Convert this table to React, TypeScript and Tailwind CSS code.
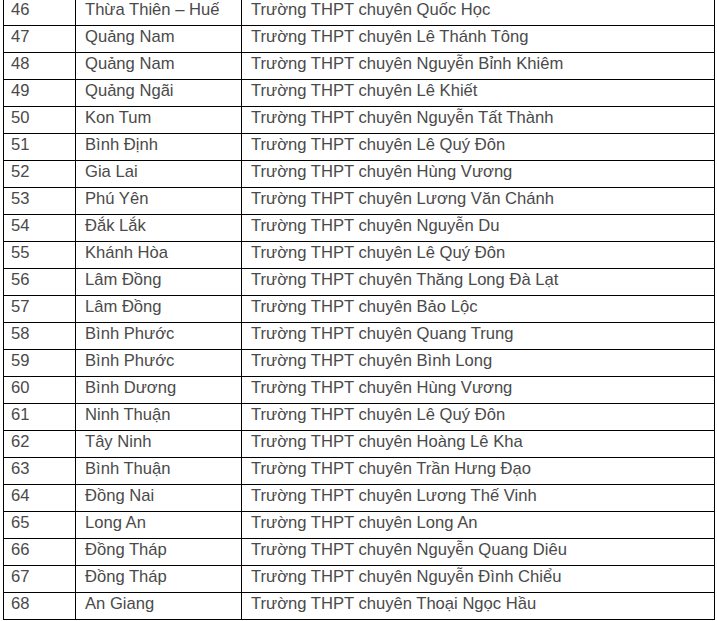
const rows: [number, string, string][] = [
  [46, 'Thừa Thiên – Huế', 'Trường THPT chuyên Quốc Học'],
  [47, 'Quảng Nam', 'Trường THPT chuyên Lê Thánh Tông'],
  [48, 'Quảng Nam', 'Trường THPT chuyên Nguyễn Bỉnh Khiêm'],
  [49, 'Quảng Ngãi', 'Trường THPT chuyên Lê Khiết'],
  [50, 'Kon Tum', 'Trường THPT chuyên Nguyễn Tất Thành'],
  [51, 'Bình Định', 'Trường THPT chuyên Lê Quý Đôn'],
  [52, 'Gia Lai', 'Trường THPT chuyên Hùng Vương'],
  [53, 'Phú Yên', 'Trường THPT chuyên Lương Văn Chánh'],
  [54, 'Đắk Lắk', 'Trường THPT chuyên Nguyễn Du'],
  [55, 'Khánh Hòa', 'Trường THPT chuyên Lê Quý Đôn'],
  [56, 'Lâm Đồng', 'Trường THPT chuyên Thăng Long Đà Lạt'],
  [57, 'Lâm Đồng', 'Trường THPT chuyên Bảo Lộc'],
  [58, 'Bình Phước', 'Trường THPT chuyên Quang Trung'],
  [59, 'Bình Phước', 'Trường THPT chuyên Bình Long'],
  [60, 'Bình Dương', 'Trường THPT chuyên Hùng Vương'],
  [61, 'Ninh Thuận', 'Trường THPT chuyên Lê Quý Đôn'],
  [62, 'Tây Ninh', 'Trường THPT chuyên Hoàng Lê Kha'],
  [63, 'Bình Thuận', 'Trường THPT chuyên Trần Hưng Đạo'],
  [64, 'Đồng Nai', 'Trường THPT chuyên Lương Thế Vinh'],
  [65, 'Long An', 'Trường THPT chuyên Long An'],
  [66, 'Đồng Tháp', 'Trường THPT chuyên Nguyễn Quang Diêu'],
  [67, 'Đồng Tháp', 'Trường THPT chuyên Nguyễn Đình Chiểu'],
  [68, 'An Giang', 'Trường THPT chuyên Thoại Ngọc Hầu'],
]

export default function App() {
  return (
    <div className="h-[621px] w-[717px] overflow-hidden bg-white font-['Liberation_Sans',Arial,sans-serif] text-[16.6px] text-[#4a4a4a]">
      <table className="ml-[3px] mt-[-2px] w-[712px] table-fixed border-collapse">
        <colgroup>
          <col className="w-[72px]" />
          <col className="w-[166px]" />
          <col />
        </colgroup>
        <tbody>
          {rows.map(([no, province, school]) => (
            <tr key={no} className="h-[27px]">
              <td className="border border-black px-[7px] pt-[2px] align-top leading-[18px]">{no}</td>
              <td className="border border-black px-[9px] pt-[2px] align-top leading-[18px]">{province}</td>
              <td className="border border-black px-[9px] pt-[2px] align-top leading-[18px]">{school}</td>
            </tr>
          ))}
        </tbody>
      </table>
    </div>
  )
}
